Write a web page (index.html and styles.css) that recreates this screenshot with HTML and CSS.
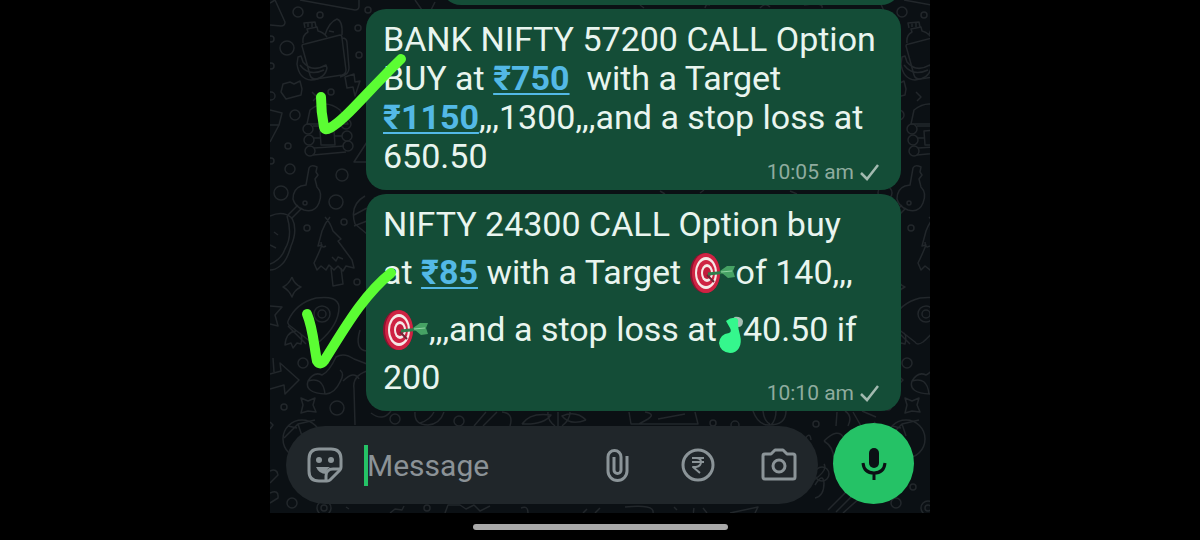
FILE: index.html
```
<!DOCTYPE html>
<html lang="en">
<head>
    <meta charset="UTF-8">
    <meta name="viewport" content="width=device-width, initial-scale=1.0">
    <title>Chat</title>
    <link rel="stylesheet" href="styles.css">
</head>
<body>

    <main class="chat">

        <!-- Wallpaper doodles -->
        <svg class="wallpaper" viewBox="0 0 660 513" preserveAspectRatio="xMinYMin slice" aria-hidden="true">
            <g id="doodles">
                <circle cx="28" cy="12" r="5"/><circle cx="50" cy="15" r="3"/><circle cx="17" cy="48" r="7"/>
                <circle cx="88" cy="28" r="3"/><circle cx="89" cy="55" r="3"/><circle cx="61" cy="92" r="3"/>
                <circle cx="25" cy="115" r="5"/><circle cx="18" cy="146" r="3"/><circle cx="20" cy="169" r="5"/>
                <circle cx="72" cy="175" r="6"/><circle cx="11" cy="193" r="7"/><circle cx="66" cy="202" r="7"/>
                <circle cx="37" cy="228" r="3"/><circle cx="74" cy="222" r="3"/><circle cx="87" cy="282" r="3"/>
                <circle cx="33" cy="363" r="5"/><circle cx="14" cy="407" r="3"/><circle cx="67" cy="408" r="7"/>
                <circle cx="22" cy="503" r="5"/><circle cx="98" cy="10" r="3"/><circle cx="1" cy="66" r="3"/>
                <circle cx="1" cy="96" r="4"/><circle cx="1" cy="161" r="3"/><circle cx="1" cy="39" r="3"/>
                <!-- shopping bag with bottle and bananas -->
                <path d="M35 44l35-9q2 0 2 3l4 32q0 4-4 5l-26 4q-5 0-6-4l-8-29q0-2 3-2M33 43q-1-8 5-11l-1-3 10-2 1 4q5 1 9 6M35 28l-1-5 11-1 1 5M38 23v4M42 22v5M55 35q4-13 12-16 6 2 5 16M59 31l5 1M72 38q5 0 5 5l2 25q0 7-9 9"/>
                <path d="M28 57l3-1 2 6q9 11 23 3l1 3q-2 11-16 12-12-1-14-16zM30 65q9 12 24 5"/>
                <path d="M0 3l5-3 10 22q0 4-4 4l-11-1M30 0l55 10q4 0 4-4V0"/>
                <path d="M13 84l7-2 4 2 6-3 2 8-1 6-15 4-5-7zM75 77l9-3 1 8 5-1-5 15-2-9-6 1z"/>
                <!-- cabin -->
                <path d="M37 124l3-14q15-12 30 0l8 14zM42 92l5 5-4 4M50 131l14-1 1 15h-14z"/>
                <circle cx="38" cy="129" r="5"/><circle cx="39" cy="140" r="5"/><circle cx="40" cy="151" r="5"/>
                <circle cx="76" cy="124" r="5"/><circle cx="77" cy="136" r="5"/><circle cx="78" cy="146" r="5"/>
                <path d="M43 126h29M44 138h6M65 136h7M44 148l30-2M43 155l33-3M0 110l12 3-3 12H0M9 125L0 142"/>
                <path d="M84 162l13-20q3-2 5 4v16z"/>
                <!-- key -->
                <path d="M39 168q2-4 8-1l-1 5 2 3-3 4 2 8q6 6 2 16-4 10-15 7-9-3-11-11 0-10 8-13l5-1zM32 208l-11 11M28 205l-10 10"/>
                <circle cx="35" cy="203" r="2"/>
                <path d="M0 216q13-6 22 2 6 12-1 28-4 15-11 20-5 4-10 4M17 216q6 20-2 33-4 11-15 15M4 232l4 3M0 245l6 3"/>
                <path d="M55 217q5 5 8 14l8 8-3 2q6 8 14 19l2 8-8-2-3 5-5-5-4 4-5-5-3 5-5-4-4 4-3-7q4-8 8-18l-4 1 4-15q3-8 8-14M51 242q0 7 5 4M62 257l4 4 2-4 5 2M61 268l2 18 10-2-2-16"/>
                <path d="M22 277q2 7 9 10-7 3-9 10-3-7-9-10 6-3 9-10M0 306l12 1-7 8 3 11-8-2"/>
                <!-- rocket -->
                <path d="M18 321q8-18 28-23 22-3 23 9 0 18-20 35-6 4-8 0l-22-17q-2-2-1-4M18 326l18 18M26 331q-10 1-11 14l6-2 2 5 4-5 4 1q2-8-1-11"/>
                <circle cx="52" cy="314" r="8"/><circle cx="52" cy="314" r="4"/>
                <path d="M0 374l11-3-1-8 19 17-14 14-1-9-14 4M3 358l1 14M95 196q-16 9-10 28l12 10M84 215l13-7M84 226l13-5"/>
                <path d="M38 381q6-10 14-6 7-3 14-18 8-5 18 2l13 5M38 381q-4 12 18 13 9-1 14-12 5-8 0-12M38 381q15-5 17 13M73 381q11-11 16-2M97 371q-15 5-13 18l1 36M90 330q-6 20 7 21"/>
                <path d="M31 398l7 3 7-3-2 7 3 7-8-1-7 2 2-8z"/>
                <circle cx="32" cy="439" r="19"/>
                <path d="M14 438l14-14 17-4M28 424l4 12M18 426l9 2M0 471q7-3 8 4l-8 8M0 493q9-4 8 5l-8 5"/>
                <circle cx="54" cy="508" r="7"/><circle cx="54" cy="508" r="3"/><path d="M0 422l3 3-3 4"/>
            </g>
            <use href="#doodles" x="604"/>
            <path d="M145 0l7 10M165 2l-4 8M101 413q12 9 20-2M145 412q-1 13 13 13 12-1 16-13M150 423q10-3 14-11M204 426l12-14M213 426l14-14M232 412q12 1 8 14M252 424q8-12 29-9-7 10-29 9M285 426q-8-6-7-14M288 426v-14M292 426q8-6 8-14M316 420q-10-10-24-4 8 10 24 4M359 412l2 12h67l-3-12M375 412q11 2 3 7l-9 5M388 419l27-5M483 411q5 14 16 14 17 0 17-14M493 411q1 10 7 13M506 411q0 9-5 14M567 412l-1 14M575 411q8 5 3 15M583 412l8 14M592 411l14 6"/>
            <path d="M554 441q14-14 20-3l-2 8-8 14q0-13-10-19M535 439q5-8 6 1M544 480q14-10 10-16M545 485q8-13 9-2 0 13-9 15M558 510l24-24M566 512l27-27M573 513l28-25M460 513l28-6-3 6M424 508q-1 5 0 5M355 507q30-3 28 6M330 508l-5 5M317 509l-4 4M175 513l3-8h12l6 4 8-4 6 6 10-5M120 513l5-4 7 1 2-4M76 507l3 2M251 508q7-3 7 5M407 510l-3-3M433 508l4 5"/>
            <circle cx="125" cy="419" r="5"/><circle cx="189" cy="421" r="5"/><circle cx="443" cy="423" r="3"/>
            <circle cx="465" cy="425" r="4"/><circle cx="546" cy="424" r="3"/><circle cx="157" cy="508" r="3"/>
            <circle cx="552" cy="474" r="7"/><circle cx="643" cy="487" r="3"/>
            <path d="M370 5l4 3M435 8q1-5 5-3M490 8q5-6 10-1M534 5q20-3 18 3M390 191l5 3M430 193l4-3M520 191l7 3"/>
        </svg>

        <section class="messages">
            <div class="bubble bubble-cut"></div>

            <article class="bubble">
                <p class="text">
                    <span class="line">BANK NIFTY 57200 CALL Option</span>
                    <span class="line">BUY at <a href="#">₹750</a>&nbsp; with a Target</span>
                    <span class="line"><a href="#">₹1150</a>,,,1300,,,and a stop loss at</span>
                    <span class="line">650.50</span>
                </p>
                <div class="meta">
                    <time>10:05 am</time>
                    <svg class="sent" viewBox="0 0 20 18"><path d="M1 10l6 6L18 2"/></svg>
                </div>
                <svg class="mark mark-one" viewBox="306 50 110 90" aria-hidden="true">
                    <path d="M321 97Q321 112 324 127Q325 131 330 128C345 120 365 94 401 59"/>
                </svg>
            </article>

            <article class="bubble">
                <p class="text">
                    <span class="line">NIFTY 24300 CALL Option buy</span>
                    <span class="line tall">at <a href="#">₹85</a> with a Target <svg class="emoji" viewBox="0 0 46 48" role="img" aria-label="target">
                            <g id="dart">
                                <ellipse cx="15" cy="22" rx="15" ry="20" fill="#8f1130"/>
                                <ellipse cx="16" cy="22" rx="14" ry="20" fill="#cf2343"/>
                                <ellipse cx="16" cy="22" rx="11" ry="16" fill="#f5e9e7"/>
                                <ellipse cx="16" cy="22" rx="9" ry="13" fill="#cf2343"/>
                                <ellipse cx="17" cy="22" rx="6" ry="9" fill="#f5e9e7"/>
                                <ellipse cx="17" cy="22" rx="4" ry="6" fill="#c21c3c"/>
                                <path d="M17 24l7 7" stroke="#6d2435" stroke-width="2"/>
                                <path d="M18 23l19-2" stroke="#2f7d4c" stroke-width="3"/>
                                <path d="M30 20l7-5h8l-2 5 2 6-7 1-6-5z" fill="#46a264"/>
                                <path d="M31 21l11-1" stroke="#8ed3a0" stroke-width="1"/>
                            </g>
                        </svg>of 140,,,</span>
                    <span class="line tall"><svg class="emoji" viewBox="0 0 46 48" role="img" aria-label="target"><use href="#dart"/></svg>,,,and a stop loss at<svg class="note" viewBox="0 0 26 48" aria-hidden="true">
                            <path d="M17 9q7-1 9 4 0 6-5 6z" fill="#a9bfb4"/>
                            <path d="M9 13q5-4 10-3 3 1 2 5 0 5 2 12 2 8-1 13-3 5-9 5-10-1-11-10 1-9 10-10 3-1 1-5z" fill="#35f78d"/>
                        </svg>40.50 if</span>
                    <span class="line">200</span>
                </p>
                <div class="meta">
                    <time>10:10 am</time>
                    <svg class="sent" viewBox="0 0 20 18"><path d="M1 10l6 6L18 2"/></svg>
                </div>
                <svg class="mark mark-two" viewBox="296 262 110 112" aria-hidden="true">
                    <path d="M307 314C313 328 314 346 317 361Q320 366 324 361C342 333 362 296 391 273"/>
                </svg>
            </article>
        </section>

        <form class="composer" action="#">
            <div class="field">
                <button type="button" class="icon" aria-label="Stickers">
                    <svg viewBox="0 0 36 36">
                        <path d="M12 2h12q10 0 10 10v8q0 2-1 3L23 33q-1 1-3 1h-8Q2 34 2 24V12Q2 2 12 2z"/>
                        <path d="M19 33v-4q0-7 7-7h7"/>
                        <circle class="fill" cx="12" cy="13" r="3"/><circle class="fill" cx="24" cy="13" r="3"/>
                        <path class="fill" d="M9 20h14q-4 2-4 7-7 0-10-7z"/>
                    </svg>
                </button>
                <span class="caret"></span>
                <input type="text" class="message" placeholder="Message" aria-label="Message">
                <button type="button" class="icon" aria-label="Attach">
                    <svg viewBox="0 0 36 36">
                        <path d="M28 9v15a9.500 9.500 0 0 1-19 0V10a6.500 6.500 0 0 1 13 0v13a3.500 3.500 0 0 1-7 0V10"/>
                    </svg>
                </button>
                <button type="button" class="icon" aria-label="Payment">
                    <svg viewBox="0 0 36 36">
                        <circle cx="18" cy="18" r="15"/>
                        <path class="thin" d="M12 11h12M12 15h12M13 11h3q5 0 5 4t-5 5h-3l7 6"/>
                    </svg>
                </button>
                <button type="button" class="icon" aria-label="Camera">
                    <svg viewBox="0 0 36 36">
                        <path d="M4 7h6l4-4h8l4 4h6q2 0 2 2v21q0 2-2 2H4q-2 0-2-2V9q0-2 2-2z"/>
                        <circle cx="18" cy="19" r="6"/>
                    </svg>
                </button>
            </div>
            <button type="button" class="mic" aria-label="Voice message">
                <svg viewBox="0 0 28 36">
                    <rect x="9" y="2" width="10" height="20" rx="5"/>
                    <path d="M3 17q1 10 11 10t11-10M14 27v7"/>
                </svg>
            </button>
        </form>

    </main>

    <footer class="navbar"><div class="handle"></div></footer>

</body>
</html>
```

FILE: styles.css
```
* {
    box-sizing: border-box;
}

body {
    margin: 0;
    height: 100vh;
    display: flex;
    flex-direction: column;
    align-items: center;
    background-color: #000;
    font-family: Roboto, "Liberation Sans", sans-serif;
}

/* Chat */
.chat {
    position: relative;
    flex: 1;
    min-height: 0;
    width: 100%;
    max-width: 660px;
    display: flex;
    flex-direction: column;
    overflow: hidden;
    background-color: #0b1014;
}

.wallpaper {
    position: absolute;
    top: 0;
    left: 0;
    width: 100%;
    height: 100%;
    fill: none;
    stroke: #22272b;
    stroke-width: 1.5;
    stroke-linejoin: round;
}

.messages {
    position: relative;
    flex: 1;
    min-height: 0;
    display: flex;
    flex-direction: column;
    justify-content: flex-end;
    align-items: flex-end;
    gap: 4px;
    padding: 0 29px 12px 96px;
}

.bubble {
    position: relative;
    flex-shrink: 0;
    width: 100%;
    display: grid;
    padding: 11px 17px 14px;
    border-radius: 20px;
    background-color: #144d37;
    color: #e9f5ef;
}

.bubble-cut {
    width: 86%;
    height: 60px;
}

.text {
    grid-area: 1 / 1;
    margin: 0;
    font-size: 34px;
    line-height: 39px;
    white-space: nowrap;
}

.line {
    display: block;
}

.tall {
    line-height: 57px;
}

.text a {
    color: #53b9e6;
    font-weight: bold;
    text-decoration: underline;
    text-decoration-thickness: 2px;
    text-underline-offset: 3px;
}

.emoji {
    width: 46px;
    height: 48px;
    vertical-align: middle;
}

.note {
    width: 26px;
    height: 48px;
    vertical-align: middle;
}

.meta {
    grid-area: 1 / 1;
    place-self: end;
    display: flex;
    align-items: center;
    gap: 6px;
    margin: 0 4px -8px 0;
    font-size: 21px;
    line-height: 24px;
    color: #8fac9f;
}

.sent {
    width: 20px;
    height: 18px;
    fill: none;
    stroke: #a3bab0;
    stroke-width: 2.5;
}

/* Hand drawn ticks lying over the bubbles */
.mark {
    position: absolute;
    fill: none;
    stroke: #5bfd33;
    stroke-width: 10;
    stroke-linecap: round;
}

.mark-one {
    top: 41px;
    left: -60px;
    width: 110px;
    height: 90px;
}

.mark-two {
    top: 68px;
    left: -70px;
    width: 110px;
    height: 112px;
}

/* Message box */
.composer {
    position: relative;
    display: flex;
    align-items: center;
    gap: 15px;
    padding: 0 16px 9px;
}

.field {
    flex: 1;
    min-width: 0;
    height: 78px;
    margin-top: 3px;
    display: flex;
    align-items: center;
    padding: 0 21px;
    border-radius: 39px;
    background-color: #20262a;
}

.icon {
    flex-shrink: 0;
    width: 36px;
    height: 36px;
    margin-left: 45px;
    padding: 0;
    border: none;
    background: none;
}

.icon:first-child {
    margin-left: 0;
}

.icon svg {
    display: block;
    fill: none;
    stroke: #8b9498;
    stroke-width: 3;
    stroke-linejoin: round;
}

.icon .fill {
    fill: #8b9498;
    stroke: none;
}

.icon .thin {
    stroke-width: 2;
}

.caret {
    width: 4px;
    height: 41px;
    margin-left: 21px;
    margin-right: -1px;
    background-color: #25c266;
}

.message {
    flex: 1;
    min-width: 0;
    padding: 0;
    border: none;
    outline: none;
    background: none;
    color: #e9f5ef;
    font-family: inherit;
    font-size: 30px;
}

.message::placeholder {
    color: #8b9297;
    opacity: 1;
}

.mic {
    width: 81px;
    height: 81px;
    display: flex;
    align-items: center;
    justify-content: center;
    padding: 0;
    border: none;
    border-radius: 50%;
    background-color: #25c266;
}

.mic svg {
    width: 28px;
    height: 36px;
    fill: none;
    stroke: #0b1014;
    stroke-width: 3;
}

.mic rect {
    fill: #0b1014;
    stroke: none;
}

/* System bar */
.navbar {
    width: 100%;
    height: 27px;
    display: flex;
    align-items: center;
    justify-content: center;
}

.handle {
    width: 255px;
    height: 6px;
    border-radius: 3px;
    background-color: #a9a9a9;
}
```
